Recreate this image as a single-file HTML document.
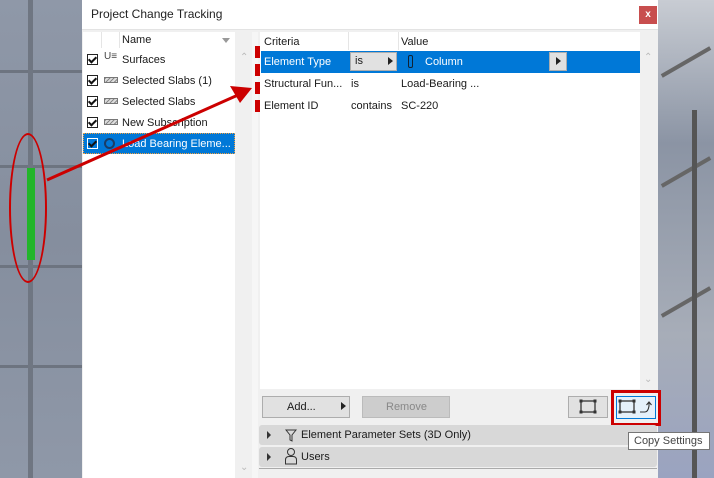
<!DOCTYPE html>
<html><head><meta charset="utf-8"><style>
*{margin:0;padding:0;box-sizing:border-box}
body{width:714px;height:478px;overflow:hidden;position:relative;font-family:"Liberation Sans",sans-serif;font-size:11px;color:#1a1a1a;background:#8d96a6}
.a{position:absolute}
.t{white-space:nowrap}
.cb{position:absolute;width:11px;height:11px;border:1px solid #222;background:#fff}
.cb::after{content:"";position:absolute;left:2px;top:0px;width:3px;height:6px;border:solid #111;border-width:0 2px 2px 0;transform:rotate(45deg)}
.hatch{position:absolute;width:14px;height:6px;border:1px solid #777;background:repeating-linear-gradient(135deg,#888 0 1px,#ddd 1px 3px)}
.btn{position:absolute;background:#e1e1e1;border:1px solid #adadad}
</style></head><body>
<div class="a" style="left:0;top:0;width:82px;height:478px;background:linear-gradient(#8f98a8,#858e9e 50%,#8f98a8)"></div>
<div class="a" style="left:0;top:70px;width:82px;height:3px;background:#6d7480"></div>
<div class="a" style="left:0;top:165px;width:82px;height:3px;background:#6d7480"></div>
<div class="a" style="left:0;top:265px;width:82px;height:3px;background:#6d7480"></div>
<div class="a" style="left:0;top:365px;width:82px;height:3px;background:#6d7480"></div>
<div class="a" style="left:28px;top:0;width:5px;height:478px;background:#6f7682"></div>
<div class="a" style="left:27px;top:168px;width:8px;height:92px;background:#22b52a"></div>
<div class="a" style="left:9px;top:133px;width:38px;height:150px;border:2px solid #c00;border-radius:50%"></div>
<div class="a" style="left:658px;top:0;width:56px;height:478px;background:linear-gradient(#c8ccd3,#8b94a4 30%,#a7adb8 70%,#9aa3c0)"></div>
<div class="a" style="left:658px;top:60px;width:56px;height:4px;background:#666;transform:rotate(-30deg)"></div>
<div class="a" style="left:658px;top:170px;width:56px;height:4px;background:#666;transform:rotate(-30deg)"></div>
<div class="a" style="left:658px;top:300px;width:56px;height:4px;background:#666;transform:rotate(-30deg)"></div>
<div class="a" style="left:692px;top:110px;width:5px;height:368px;background:#555"></div>
<div class="a" style="left:82px;top:0;width:576px;height:478px;background:#f0f0f0"></div>
<div class="a" style="left:82px;top:0;width:576px;height:30px;background:#fff;border-bottom:1px solid #e3e3e3"></div>
<div class="a t" style="left:91px;top:7px;font-size:12px;color:#222">Project Change Tracking</div>
<div class="a" style="left:639px;top:6px;width:18px;height:18px;background:#c84e4e;color:#fff;font-size:10px;font-weight:bold;text-align:center;line-height:17px">x</div>
<div class="a" style="left:83px;top:32px;width:152px;height:446px;background:#fff"></div>
<div class="a" style="left:235px;top:32px;width:17px;height:446px;background:#f0f0f0"></div>
<div class="a" style="left:252px;top:32px;width:6px;height:446px;background:#f6f6f6"></div>
<div class="a" style="left:101px;top:32px;width:1px;height:16px;background:#e5e5e5"></div>
<div class="a" style="left:119px;top:32px;width:1px;height:16px;background:#e5e5e5"></div>
<div class="a t" style="left:122px;top:34px">Name</div>
<div class="a" style="left:222px;top:38px;border:4px solid transparent;border-top:5px solid #999"></div>
<div class="a t" style="left:240px;top:52px;color:#bbb;font-size:10px">&#8963;</div>
<div class="a t" style="left:240px;top:462px;color:#bbb;font-size:10px">&#8964;</div>
<div class="cb" style="left:87px;top:54px"></div><div class="a t" style="left:104px;top:51px;font-size:10px;color:#444">U&#8801;</div><div class="a t" style="left:122px;top:54px">Surfaces</div>
<div class="cb" style="left:87px;top:75px"></div><div class="hatch" style="left:104px;top:77px"></div><div class="a t" style="left:122px;top:75px">Selected Slabs (1)</div>
<div class="cb" style="left:87px;top:96px"></div><div class="hatch" style="left:104px;top:98px"></div><div class="a t" style="left:122px;top:96px">Selected Slabs</div>
<div class="cb" style="left:87px;top:117px"></div><div class="hatch" style="left:104px;top:119px"></div><div class="a t" style="left:122px;top:117px">New Subscription</div>
<div class="a" style="left:83px;top:133px;width:152px;height:21px;background:#0078d7;border:1px dotted #f0a040"></div>
<div class="cb" style="left:87px;top:138px;border-color:#fff;background:#0078d7"></div>
<div class="a" style="left:104px;top:138px;width:11px;height:11px;border:2px solid #1a3d66;border-radius:50%"></div>
<div class="a t" style="left:122px;top:138px;color:#fff">Load Bearing Eleme...</div>
<div class="a" style="left:260px;top:32px;width:380px;height:357px;background:#fff"></div>
<div class="a" style="left:640px;top:32px;width:17px;height:357px;background:#f0f0f0"></div>
<div class="a t" style="left:644px;top:52px;color:#bbb;font-size:10px">&#8963;</div>
<div class="a t" style="left:644px;top:374px;color:#bbb;font-size:10px">&#8964;</div>
<div class="a" style="left:348px;top:32px;width:1px;height:18px;background:#e5e5e5"></div>
<div class="a" style="left:398px;top:32px;width:1px;height:18px;background:#e5e5e5"></div>
<div class="a t" style="left:264px;top:36px">Criteria</div>
<div class="a t" style="left:401px;top:36px">Value</div>
<div class="a" style="left:261px;top:51px;width:379px;height:22px;background:#0078d7"></div>
<div class="a t" style="left:264px;top:56px;color:#fff">Element Type</div>
<div class="a" style="left:350px;top:52px;width:47px;height:19px;background:#e1e1e1;border:1px solid #adadad"></div>
<div class="a t" style="left:355px;top:55px">is</div>
<div class="a" style="left:388px;top:57px;border:4px solid transparent;border-left:5px solid #222"></div>
<div class="a" style="left:408px;top:55px;width:5px;height:13px;border:1px solid #123;border-radius:2px"></div>
<div class="a t" style="left:425px;top:56px;color:#fff">Column</div>
<div class="a" style="left:549px;top:52px;width:18px;height:19px;background:#e1e1e1;border:1px solid #adadad"></div>
<div class="a" style="left:556px;top:57px;border:4px solid transparent;border-left:5px solid #222"></div>
<div class="a t" style="left:264px;top:78px">Structural Fun...</div><div class="a t" style="left:351px;top:78px">is</div><div class="a t" style="left:401px;top:78px">Load-Bearing ...</div>
<div class="a t" style="left:264px;top:100px">Element ID</div><div class="a t" style="left:351px;top:100px">contains</div><div class="a t" style="left:401px;top:100px">SC-220</div>
<div class="a" style="left:255px;top:46px;width:5px;height:12px;background:#c00"></div>
<div class="a" style="left:255px;top:64px;width:5px;height:12px;background:#c00"></div>
<div class="a" style="left:255px;top:82px;width:5px;height:12px;background:#c00"></div>
<div class="a" style="left:255px;top:100px;width:5px;height:12px;background:#c00"></div>
<div class="btn" style="left:262px;top:396px;width:88px;height:22px"></div>
<div class="a t" style="left:287px;top:401px">Add...</div>
<div class="a" style="left:341px;top:402px;border:4px solid transparent;border-left:5px solid #222"></div>
<div class="btn" style="left:362px;top:396px;width:88px;height:22px;background:#cdcdcd;border-color:#bbb"></div>
<div class="a t" style="left:386px;top:401px;color:#888">Remove</div>
<div class="btn" style="left:568px;top:396px;width:40px;height:22px"></div>
<svg class="a" style="left:579px;top:399px" width="18" height="16"><rect x="2" y="2" width="14" height="11" stroke="#333" stroke-width="1.3" fill="none"/><g fill="#333"><rect x="0.5" y="0.5" width="3" height="3"/><rect x="14.5" y="0.5" width="3" height="3"/><rect x="0.5" y="11.5" width="3" height="3"/><rect x="14.5" y="11.5" width="3" height="3"/></g></svg>
<div class="a" style="left:611px;top:390px;width:50px;height:36px;border:3px solid #c00"></div>
<div class="a" style="left:616px;top:396px;width:40px;height:23px;background:#e5f1fb;border:1px solid #0078d7"></div>
<svg class="a" style="left:618px;top:399px" width="18" height="16"><rect x="2" y="2" width="14" height="11" stroke="#333" stroke-width="1.3" fill="none"/><g fill="#333"><rect x="0.5" y="0.5" width="3" height="3"/><rect x="14.5" y="0.5" width="3" height="3"/><rect x="0.5" y="11.5" width="3" height="3"/><rect x="14.5" y="11.5" width="3" height="3"/></g></svg>
<svg class="a" style="left:639px;top:400px" width="14" height="14"><path d="M1 12 H6 Q9 12 10 6 V2 M7.5 5 L10 2 L12.5 5" stroke="#333" stroke-width="1.1" fill="none"/></svg>
<div class="a" style="left:259px;top:425px;width:398px;height:20px;background:#d8d8d8;border-radius:3px"></div>
<div class="a" style="left:267px;top:431px;border:4px solid transparent;border-left:4px solid #333"></div>
<svg class="a" style="left:285px;top:429px" width="12" height="13"><path d="M1 1 H11 L7 6 V12 L5 11 V6 Z" stroke="#333" fill="none"/></svg>
<div class="a t" style="left:301px;top:429px">Element Parameter Sets (3D Only)</div>
<div class="a" style="left:259px;top:447px;width:398px;height:20px;background:#d8d8d8;border-radius:3px"></div>
<div class="a" style="left:267px;top:453px;border:4px solid transparent;border-left:4px solid #333"></div>
<svg class="a" style="left:284px;top:447px" width="14" height="19"><circle cx="7" cy="5" r="3.5" stroke="#333" fill="none"/><path d="M1.5 17 V13 Q1.5 9.5 5 9.5 H9 Q12.5 9.5 12.5 13 V17 Z" stroke="#333" fill="none"/></svg>
<div class="a t" style="left:301px;top:451px">Users</div>
<div class="a" style="left:259px;top:468px;width:398px;height:1px;background:#aaa"></div>
<div class="a t" style="left:628px;top:432px;width:82px;height:18px;background:#fff;border:1px solid #767676;padding:2px 0 0 5px;color:#444">Copy Settings</div>
<svg class="a" style="left:0;top:0" width="714" height="478"><line x1="47" y1="180" x2="238" y2="95" stroke="#c00" stroke-width="3"/><polygon points="252,88 230,86 240,103" fill="#c00"/></svg>
</body></html>
